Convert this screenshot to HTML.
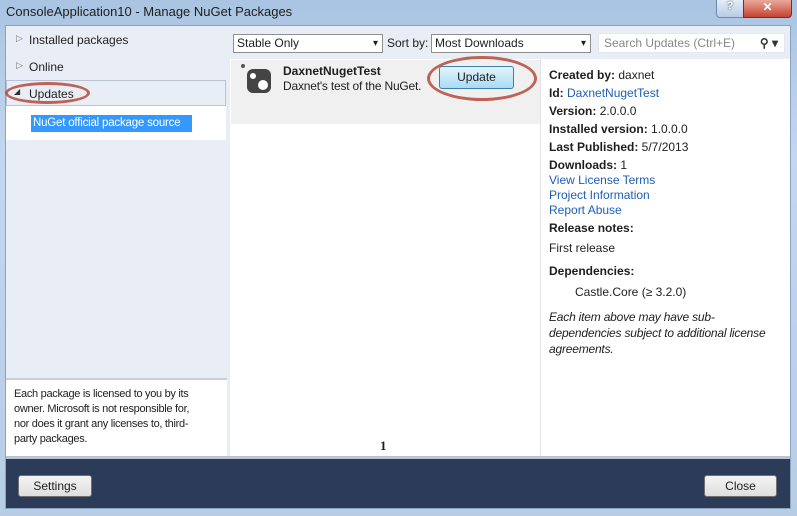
<!DOCTYPE html><html><head><style>
body{margin:0;width:797px;height:516px;overflow:hidden;position:relative;font-family:"Liberation Sans",sans-serif;font-size:12px;color:#1e1e1e;background:linear-gradient(180deg,#a9c4e2 0,#c3d7ee 30%,#b7cde6 100%)}
.a{position:absolute;white-space:nowrap}
.combo{position:absolute;border:1px solid #8e8f8f;background:#fff;font-size:12px;line-height:17px;padding-left:3px;box-sizing:border-box;height:19px}
.combo:after{content:"▾";position:absolute;right:4px;top:0;font-size:10px}
.btn{position:absolute;border:1px solid #707070;border-radius:3px;background:linear-gradient(#f4f4f4,#dedede);text-align:center;box-sizing:border-box;font-size:12px}
.k{font-weight:bold}
.l{color:#1c5fb5}
.d div{height:15px;line-height:15px}
</style></head><body>
<div class="a" style="left:6px;top:4px;font-size:13px">ConsoleApplication10 - Manage NuGet Packages</div>
<div class="a" style="left:716px;top:0;width:26px;height:17px;border:1px solid #6f8bab;border-top:0;border-radius:0 0 0 4px;background:linear-gradient(#e4edf8,#b9cce4);text-align:center;font-size:11px;color:#fff;font-weight:bold;text-shadow:0 0 2px #333">?</div>
<div class="a" style="left:743px;top:0;width:47px;height:17px;border:1px solid #7d2a22;border-top:0;border-radius:0 0 4px 0;background:linear-gradient(#e9a99c,#c5432e);text-align:center;font-size:12px;color:#fff;font-weight:bold">✕</div>
<div class="a" style="left:5px;top:25px;width:786px;height:484px;background:#fff;border:1px solid #8aa3c0;box-sizing:border-box"></div>
<div class="a" style="left:6px;top:26px;width:221px;height:352px;background:#e9edf6"></div>
<div class="a" style="left:16px;top:33px;font-size:9px;color:#777">▷</div>
<div class="a" style="left:29px;top:33px">Installed packages</div>
<div class="a" style="left:16px;top:60px;font-size:9px;color:#777">▷</div>
<div class="a" style="left:29px;top:60px">Online</div>
<div class="a" style="left:6px;top:80px;width:220px;height:26px;border:1px solid #b9c3d3;box-sizing:border-box;background:#e9edf6"></div>
<div class="a" style="left:14px;top:87px;font-size:8px;color:#333">◢</div>
<div class="a" style="left:29px;top:87px">Updates</div>
<div class="a" style="left:5px;top:82px;width:85px;height:22px;border:3px solid #b54a3a;border-radius:50%;box-sizing:border-box;opacity:.85"></div>
<div class="a" style="left:6px;top:106px;width:220px;height:34px;background:#fff"></div>
<div class="a" style="left:31px;top:115px;width:161px;height:17px;background:#3399ff;color:#fff;line-height:17px;padding-left:2px;box-sizing:border-box;font-size:11.5px;letter-spacing:-0.2px;overflow:hidden">NuGet official package source</div>
<div class="a" style="left:6px;top:378px;width:221px;height:78px;background:#fff;border-top:2px solid #c8d0dc;box-sizing:border-box"></div>
<div class="a" style="left:14px;top:387px;width:186px;font-size:11px;line-height:15px;white-space:normal;letter-spacing:-0.3px">Each package is licensed to you by its owner. Microsoft is not responsible for, nor does it grant any licenses to, third-party packages.</div>
<div class="a" style="left:227px;top:26px;width:3px;height:430px;background:#e9edf6"></div>
<div class="a" style="left:230px;top:26px;width:560px;height:33px;background:#e9edf6"></div>
<div class="combo" style="left:233px;top:34px;width:150px">Stable Only</div>
<div class="a" style="left:387px;top:36px">Sort by:</div>
<div class="combo" style="left:431px;top:34px;width:160px">Most Downloads</div>
<div class="a" style="left:598px;top:33px;width:187px;height:20px;background:#fff;border:1px solid #e3e7ef;box-sizing:border-box;color:#888;line-height:18px;padding-left:5px">Search Updates (Ctrl+E)<span style="position:absolute;right:6px;color:#333;font-weight:bold">⚲ ▾</span></div>
<div class="a" style="left:231px;top:60px;width:309px;height:64px;background:#f0f0f0"></div>
<div class="a" style="left:241px;top:64px;width:4px;height:4px;border-radius:50%;background:#555"></div>
<div class="a" style="left:247px;top:69px;width:24px;height:24px;border-radius:6px;background:#444"></div>
<div class="a" style="left:250px;top:73px;width:6px;height:6px;border-radius:50%;background:#fff"></div>
<div class="a" style="left:258px;top:80px;width:10px;height:10px;border-radius:50%;background:#fff"></div>
<div class="a k" style="left:283px;top:64px">DaxnetNugetTest</div>
<div class="a" style="left:283px;top:79px;letter-spacing:-0.2px">Daxnet's test of the NuGet.</div>
<div class="btn" style="left:439px;top:66px;width:75px;height:23px;line-height:21px;border-color:#3c7fb1;background:linear-gradient(#e3f4fc,#a9dbf6)">Update</div>
<div class="a" style="left:427px;top:56px;width:110px;height:45px;border:3px solid #b54a3a;border-radius:50%;box-sizing:border-box;opacity:.85"></div>
<div class="a" style="left:380px;top:438px;font-family:'Liberation Serif',serif;font-weight:bold;font-size:13px">1</div>
<div class="a" style="left:540px;top:59px;width:1px;height:397px;background:#e3e3e3"></div>
<div class="a d" style="left:549px;top:68px;width:232px;font-size:12px;white-space:normal">
<div><span class="k">Created by:</span> daxnet</div>
<div style="margin-top:3px"><span class="k">Id:</span> <span class="l">DaxnetNugetTest</span></div>
<div style="margin-top:3px"><span class="k">Version:</span> 2.0.0.0</div>
<div style="margin-top:3px"><span class="k">Installed version:</span> 1.0.0.0</div>
<div style="margin-top:3px"><span class="k">Last Published:</span> 5/7/2013</div>
<div style="margin-top:3px"><span class="k">Downloads:</span> 1</div>
<div class="l">View License Terms</div>
<div class="l">Project Information</div>
<div class="l">Report Abuse</div>
<div class="k" style="margin-top:3px">Release notes:</div>
<div style="margin-top:5px">First release</div>
<div class="k" style="margin-top:8px">Dependencies:</div>
<div style="margin-top:6px;padding-left:26px">Castle.Core (≥ 3.2.0)</div>
<div style="margin-top:9px;font-style:italic;height:auto;line-height:16px;letter-spacing:-0.2px">Each item above may have sub-dependencies subject to additional license agreements.</div>
</div>
<div class="a" style="left:6px;top:456px;width:784px;height:3px;background:#b8c4d4"></div>
<div class="a" style="left:6px;top:459px;width:784px;height:49px;background:#2c3b57"></div>
<div class="btn" style="left:18px;top:475px;width:74px;height:22px;line-height:20px">Settings</div>
<div class="btn" style="left:704px;top:475px;width:73px;height:22px;line-height:20px">Close</div>
</body></html>
